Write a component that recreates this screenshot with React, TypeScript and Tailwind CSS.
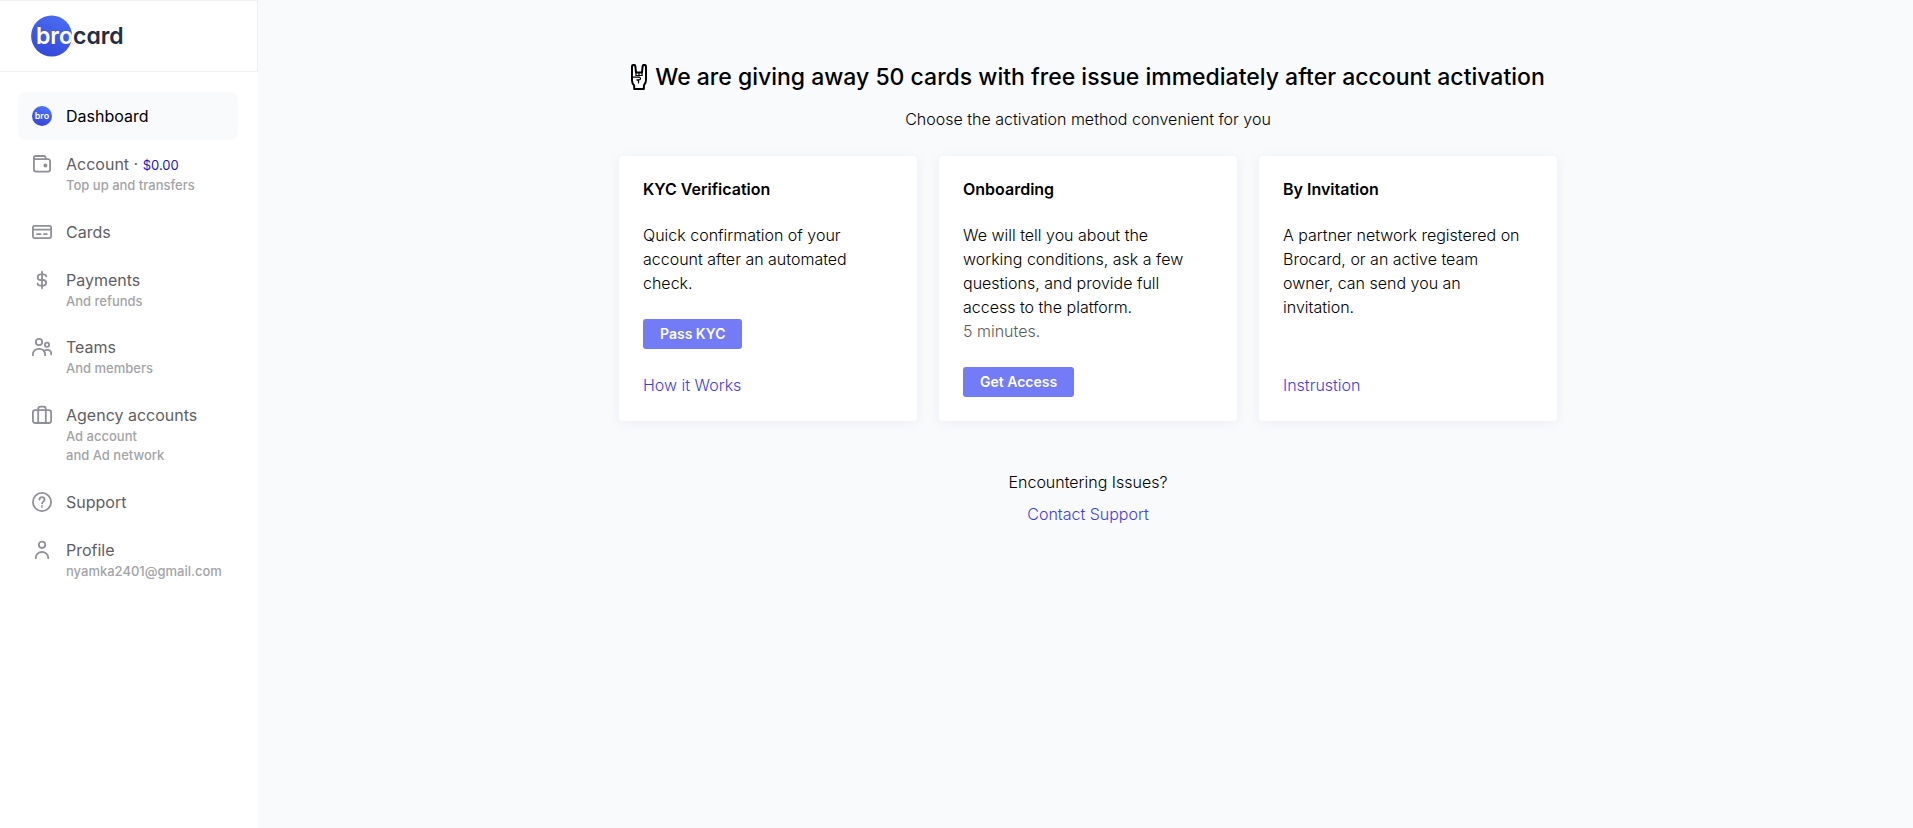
import type { ReactNode } from "react";

function Icon({ children }: { children: ReactNode }) {
  return (
    <svg
      aria-hidden="true"
      viewBox="0 0 20 20"
      className="size-5 shrink-0"
      fill="none"
      stroke="currentColor"
      strokeWidth="1.8"
      strokeLinecap="round"
      strokeLinejoin="round"
    >
      {children}
    </svg>
  );
}

function Logo() {
  return (
    <svg aria-label="brocard" role="img" viewBox="0 0 96 42" className="h-[42px] w-24">
      <defs>
        <linearGradient id="logo-fill" x1="0.7" y1="0" x2="0.3" y2="1">
          <stop offset="0" stopColor="#4a6df0" />
          <stop offset="1" stopColor="#3448d8" />
        </linearGradient>
      </defs>
      <circle cx="20.6" cy="21" r="20.5" fill="url(#logo-fill)" />
      <text
        x="5"
        y="29"
        fontSize="23"
        fontWeight="600"
        fill="#fff"
        className="font-['Inter',sans-serif] [font-feature-settings:'cv11']"
      >
        bro<tspan fill="#252d42">card</tspan>
      </text>
    </svg>
  );
}

function BroIcon() {
  return (
    <svg aria-hidden="true" viewBox="0 0 20 20" className="size-5 shrink-0">
      <defs>
        <linearGradient id="bro-fill" x1="0.7" y1="0" x2="0.3" y2="1">
          <stop offset="0" stopColor="#4f74fa" />
          <stop offset="1" stopColor="#3343d6" />
        </linearGradient>
      </defs>
      <circle cx="10" cy="10" r="10" fill="url(#bro-fill)" />
      <text
        x="10"
        y="13"
        textAnchor="middle"
        fontSize="9"
        fontWeight="600"
        fill="#fff"
        className="font-['Inter',sans-serif]"
      >
        bro
      </text>
    </svg>
  );
}

function HornsIcon() {
  return (
    <svg
      aria-hidden="true"
      viewBox="0 0 16 26"
      className="h-[26px] w-4 shrink-0"
      fill="none"
      stroke="currentColor"
      strokeWidth="2"
      strokeLinejoin="round"
      strokeLinecap="round"
    >
      <path
        fill="#fff"
        d="M3.200 25v-3.600C1.700 20 1 18.500 1 16.500V2.600a1.700 1.700 0 0 1 3.400 0L5 8.500h6l.6-5.900a1.700 1.700 0 0 1 3.400 0V16c0 2.200-.7 3.800-2.100 5.400V25Z"
      />
      <path
        d="M5 8.500v3M8 8.500v3M11 8.500v3M4.800 11.500h6.600M1.400 13.200h6.800a1.300 1.300 0 0 1 0 2.600H5.800c1.600.4 2.200 1.600 1.600 3.200"
        strokeWidth="1.200"
      />
    </svg>
  );
}

type NavItem = {
  label: string;
  icon: ReactNode;
  amount?: string;
  sub?: string[];
  active?: boolean;
};

const navItems: NavItem[] = [
  { label: "Dashboard", icon: <BroIcon />, active: true },
  {
    label: "Account",
    amount: "$0.00",
    sub: ["Top up and transfers"],
    icon: (
      <Icon>
        <path d="M1.900 3.600v12a2 2 0 0 0 2 2h12.200a2 2 0 0 0 2-2V7.200a2 2 0 0 0-2-2H3.500A1.600 1.600 0 0 1 1.900 3.600 1.600 1.600 0 0 1 3.500 2h8.700a1.400 1.400 0 0 1 1.400 1.400v1.600" />
        <circle cx="13.400" cy="11.500" r="1.100" fill="currentColor" />
      </Icon>
    ),
  },
  {
    label: "Cards",
    icon: (
      <Icon>
        <rect x="0.900" y="3.900" width="18.200" height="12.200" rx="1.800" />
        <path d="M1 7.700h18" />
        <path d="M5 12.200h3.600M12 12.200h2.800" />
      </Icon>
    ),
  },
  {
    label: "Payments",
    sub: ["And refunds"],
    icon: (
      <Icon>
        <path d="M10 1.700v16.600M14.200 6.400c-.2-1.300-1.400-2.100-2.800-2.100H8.600a2.800 2.800 0 0 0 0 5.700h3.100a2.900 2.900 0 0 1 0 5.700H8.600c-1.600 0-2.900-.8-3-2.200" />
      </Icon>
    ),
  },
  {
    label: "Teams",
    sub: ["And members"],
    icon: (
      <Icon>
        <circle cx="7" cy="5" r="3.200" />
        <circle cx="15" cy="7.800" r="2.100" />
        <path d="M0.900 18.200v-.7a5.700 5.700 0 0 1 5.700-5.700h.8a5.700 5.700 0 0 1 5.700 5.700v.7" />
        <path d="M12 14.200c.7-.9 1.700-1.400 3-1.400 2.500 0 4.200 1.600 4.200 4v.6" />
      </Icon>
    ),
  },
  {
    label: "Agency accounts",
    sub: ["Ad account", "and Ad network"],
    icon: (
      <Icon>
        <rect x="0.900" y="5.200" width="18.200" height="12.800" rx="2.200" />
        <path d="M6.200 18V4a2.400 2.400 0 0 1 2.400-2.400h2.800A2.400 2.400 0 0 1 13.800 4v14" />
      </Icon>
    ),
  },
  {
    label: "Support",
    icon: (
      <Icon>
        <circle cx="10" cy="10" r="9.100" />
        <path d="M7.400 7.600a2.600 2.600 0 0 1 5.200.2c0 1.700-2.500 2-2.500 3.600" />
        <circle cx="10" cy="14.500" r="0.300" fill="currentColor" />
      </Icon>
    ),
  },
  {
    label: "Profile",
    sub: ["nyamka2401@gmail.com"],
    icon: (
      <Icon>
        <circle cx="10" cy="4.800" r="3.200" />
        <path d="M3.800 18.200v-.6a6.200 5.600 0 0 1 12.400 0v.6" />
      </Icon>
    ),
  },
];

function Sidebar() {
  return (
    <aside className="w-[258px] shrink-0 bg-white">
      <div className="flex h-[72px] items-center border-y border-r border-[#eff0f2] pl-[31px]">
        <a href="#home">
          <Logo />
        </a>
      </div>
      <nav className="pt-5 pr-5 pl-[18px]">
        {navItems.map((item) => (
          <a
            key={item.label}
            href="#nav"
            className={`flex gap-3.5 rounded-lg py-3 pl-3.5 ${
              item.active ? "bg-[#f9fafc] text-black" : "text-[#5f6063]"
            }`}
          >
            <span className="flex h-6 items-center text-[#8f9098]">{item.icon}</span>
            <span className="flex flex-col whitespace-nowrap">
              <span className="text-base">
                {item.label}
                {item.amount && (
                  <>
                    {" · "}
                    <span className="text-[13px] text-[#2118b8]">{item.amount}</span>
                  </>
                )}
              </span>
              {item.sub?.map((line) => (
                <span key={line} className="text-[13px] leading-normal font-medium text-[#a3a4a6]">
                  {line}
                </span>
              ))}
            </span>
          </a>
        ))}
      </nav>
    </aside>
  );
}

const linkClass = "text-[#3f40e4]";

function MethodCard({
  title,
  text,
  note,
  action,
  link,
}: {
  title: string;
  text: string;
  note?: string;
  action?: string;
  link?: string;
}) {
  return (
    <section className="flex flex-col items-start rounded bg-white p-6 shadow-[0_2px_12px_rgba(40,50,90,0.06)]">
      <h2 className="text-base leading-[19px] font-semibold">{title}</h2>
      <p className="mt-6 pr-2">
        {text}
        {note && <span className="block text-[#5c5c5c]">{note}</span>}
      </p>
      {action && (
        <button
          type="button"
          className="mt-6 h-[30px] rounded-[3px] bg-[#737bf6] px-[17px] text-sm font-semibold text-white"
        >
          {action}
        </button>
      )}
      {link && (
        <a href="#more" className={`mt-auto ${linkClass}`}>
          {link}
        </a>
      )}
    </section>
  );
}

export default function App() {
  return (
    <div className="flex min-h-screen bg-[#f9fafc] font-['Inter',sans-serif] text-base text-black">
      <Sidebar />
      <main className="flex grow flex-col items-center pt-[61px] pl-[5px] font-light">
        <h1 className="flex items-center gap-2 text-[23px] leading-8 font-medium">
          <HornsIcon />
          We are giving away 50 cards with free issue immediately after account activation
        </h1>
        <p className="mt-3.5">Choose the activation method convenient for you</p>
        <div className="mt-[25px] grid w-full max-w-[938px] grid-cols-3 gap-[22px]">
          <MethodCard
            title="KYC Verification"
            text="Quick confirmation of your account after an automated check."
            action="Pass KYC"
            link="How it Works"
          />
          <MethodCard
            title="Onboarding"
            text="We will tell you about the working conditions, ask a few questions, and provide full access to the platform."
            note="5 minutes."
            action="Get Access"
          />
          <MethodCard
            title="By Invitation"
            text="A partner network registered on Brocard, or an active team owner, can send you an invitation."
            link="Instrustion"
          />
        </div>
        <p className="mt-[49px]">Encountering Issues?</p>
        <a href="#support" className={`mt-2 ${linkClass}`}>
          Contact Support
        </a>
      </main>
    </div>
  );
}
